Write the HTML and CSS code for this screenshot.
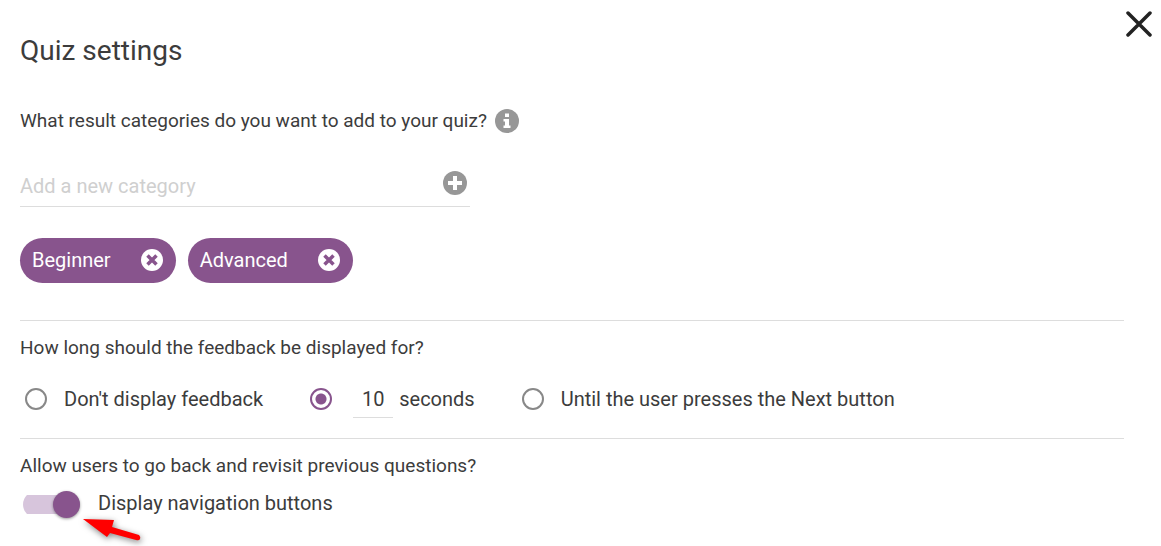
FILE: index.html
```html
<!DOCTYPE html>
<html lang="en">

<head>
    <meta charset="UTF-8">
    <title>Quiz settings</title>
    <link rel="stylesheet" href="styles.css">
</head>

<body>
    <button class="btn-close" type="button" aria-label="Close">
        <svg width="26" height="26" viewBox="0 0 26 26">
            <path d="M2 2L24 24M24 2L2 24" stroke="#222" stroke-width="3.500" stroke-linecap="round" />
        </svg>
    </button>
    <form class="settings">
        <h1 class="title">Quiz settings</h1>

        <div class="question question-info">
            <label for="category">What result categories do you want to add to your quiz?</label>
            <button class="btn-icon" type="button" aria-label="Info">
                <svg width="24" height="24" viewBox="0 0 24 24">
                    <circle cx="12" cy="12" r="12" fill="#979797" />
                    <path d="M10 4.500h4v3.500h-4zM8.500 10h5.500v6.500h1.500v2.500h-7v-2.500h1.500v-4h-1.500z" fill="#fff" />
                </svg>
            </button>
        </div>
        <div class="category-field">
            <input class="category-input" type="text" id="category" placeholder="Add a new category">
            <button class="btn-icon" type="button" aria-label="Add">
                <svg width="24" height="24" viewBox="0 0 24 24">
                    <circle cx="12" cy="12" r="12" fill="#979797" />
                    <path d="M12 5v14M5 12h14" stroke="#fff" stroke-width="4" />
                </svg>
            </button>
        </div>
        <div class="chips">
            <div class="chip">
                <span>Beginner</span>
                <button class="btn-icon" type="button" aria-label="Remove Beginner">
                    <svg width="22" height="22" viewBox="0 0 22 22">
                        <circle cx="11" cy="11" r="11" fill="#fff" />
                        <path d="M6.500 6.500l9 9M15.500 6.500l-9 9" stroke="#88548d" stroke-width="3.500" />
                    </svg>
                </button>
            </div>
            <div class="chip">
                <span>Advanced</span>
                <button class="btn-icon" type="button" aria-label="Remove Advanced">
                    <svg width="22" height="22" viewBox="0 0 22 22">
                        <circle cx="11" cy="11" r="11" fill="#fff" />
                        <path d="M6.500 6.500l9 9M15.500 6.500l-9 9" stroke="#88548d" stroke-width="3.500" />
                    </svg>
                </button>
            </div>
        </div>

        <div class="section">
            <div class="question">How long should the feedback be displayed for?</div>
            <div class="options">
                <div class="option">
                    <input class="radio" type="radio" name="feedback" id="feedback-none">
                    <label for="feedback-none">Don't display feedback</label>
                </div>
                <div class="option">
                    <input class="radio" type="radio" name="feedback" id="feedback-time" checked>
                    <div class="duration">
                        <input class="seconds" type="text" value="10" aria-label="Seconds">
                        <label for="feedback-time">seconds</label>
                    </div>
                </div>
                <div class="option">
                    <input class="radio" type="radio" name="feedback" id="feedback-next">
                    <label for="feedback-next">Until the user presses the Next button</label>
                </div>
            </div>
        </div>

        <div class="section">
            <div class="question">Allow users to go back and revisit previous questions?</div>
            <div class="toggle-row">
                <input class="toggle" type="checkbox" id="navigation" checked>
                <label for="navigation">Display navigation buttons</label>
                <svg class="pointer" width="72" height="40" viewBox="0 0 72 40">
                    <path d="M3 6L34 7L32 14L59 22Q61 24 60 26Q59 28 56 27L30 20L27 24Z" fill="#f00" />
                </svg>
            </div>
        </div>
    </form>
</body>

</html>
```

FILE: styles.css
```css
* {
    box-sizing: border-box;
}

body {
    font-family: Roboto, "Liberation Sans", sans-serif;
    margin: 0;
    background-color: #ffffff;
    color: #3c3c3c;
    font-size: 20px;
    line-height: 24px;
}

button {
    border: none;
    background: none;
    padding: 0;
    cursor: pointer;
}

svg {
    display: block;
    fill: none;
}

input {
    font: inherit;
    color: inherit;
    margin: 0;
}

.btn-close {
    position: absolute;
    top: 11px;
    right: 9px;
}

.settings {
    padding: 33px 37px 32px 20px;
}

.title {
    margin: 0 0 40px;
    font-size: 28px;
    line-height: 36px;
    font-weight: 400;
}

.question {
    font-size: 19px;
}

.question-info {
    display: flex;
    align-items: center;
    gap: 8px;
}

.category-field {
    display: flex;
    align-items: center;
    max-width: 450px;
    height: 48px;
    margin-top: 26px;
    padding-right: 3px;
    border-bottom: 1px solid #dddddd;
}

.category-input {
    flex: 1;
    min-width: 0;
    height: 48px;
    padding: 6px 0 0;
    border: none;
    outline: none;
    background: none;
}

.category-input::placeholder {
    color: #cfcfcf;
    opacity: 1;
}

.chips {
    display: flex;
    flex-wrap: wrap;
    gap: 12px;
    margin: 31px 0 37px;
}

.chip {
    display: flex;
    align-items: center;
    gap: 30px;
    height: 45px;
    padding: 0 13px 2px 12px;
    border-radius: 23px;
    background-color: #88548d;
    color: #ffffff;
}

.section {
    padding-top: 15px;
    border-top: 1px solid #dddddd;
}

.options {
    display: flex;
    flex-wrap: wrap;
    column-gap: 47px;
    padding: 20px 0 20px 5px;
}

.option {
    display: flex;
    align-items: center;
    gap: 17px;
    height: 38px;
}

.radio {
    appearance: none;
    flex: none;
    width: 22px;
    height: 22px;
    border: 2px solid #888888;
    border-radius: 50%;
}

.radio:checked {
    border-color: #88548d;
    background: radial-gradient(circle, #88548d 5px, #ffffff 6px);
}

.duration {
    display: flex;
    align-items: center;
    gap: 6px;
    padding-left: 4px;
}

.seconds {
    width: 40px;
    height: 38px;
    padding: 0;
    border: none;
    border-bottom: 1px solid #dddddd;
    outline: none;
    text-align: center;
}

.toggle-row {
    position: relative;
    display: flex;
    align-items: flex-start;
    gap: 18px;
    margin-top: 13px;
    padding-left: 3px;
}

.toggle {
    appearance: none;
    display: flex;
    align-items: center;
    width: 57px;
    height: 27px;
    background: linear-gradient(#d7c5dc, #d7c5dc) center / 100% 19px no-repeat;
    border-radius: 14px;
}

.toggle::before {
    content: "";
    width: 27px;
    height: 27px;
    border-radius: 50%;
    background-color: #88548d;
    box-shadow: 0 1px 3px rgba(0, 0, 0, 0.4);
}

.toggle:checked::before {
    margin-left: auto;
}

/* red arrow over the toggle */
.pointer {
    position: absolute;
    top: 22px;
    left: 60px;
    overflow: visible;
    filter: drop-shadow(1px 2px 3px rgba(0, 0, 0, 0.5));
    pointer-events: none;
}
```
